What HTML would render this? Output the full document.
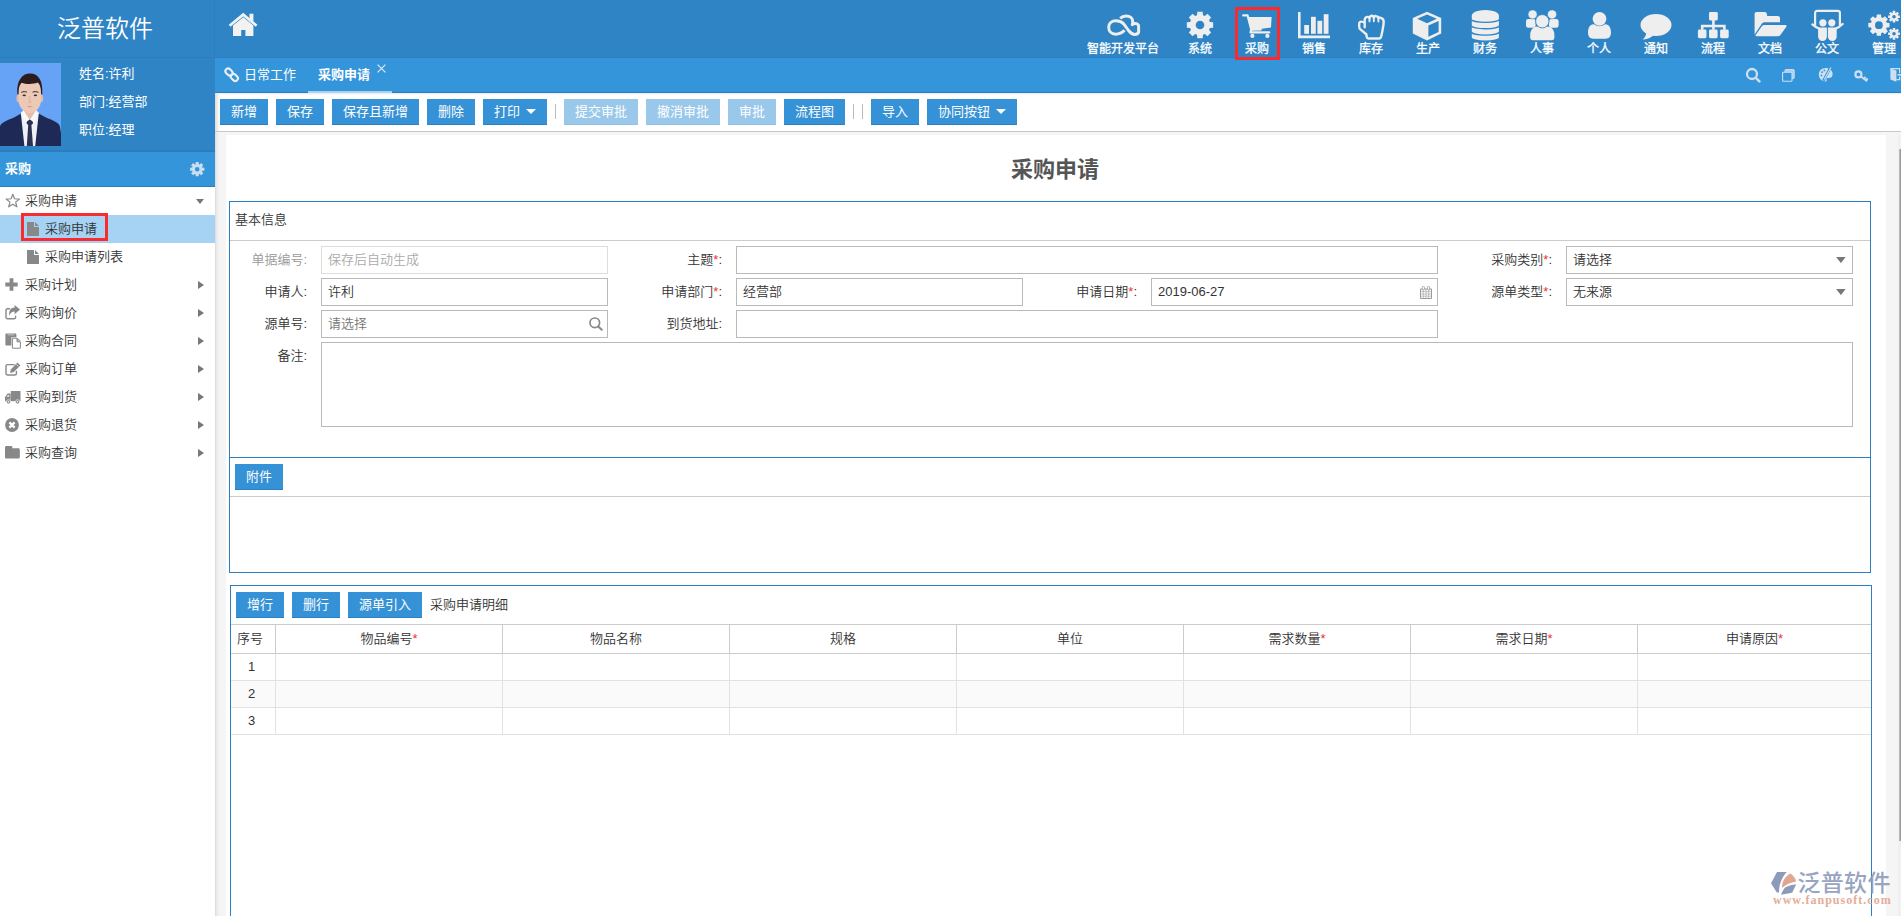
<!DOCTYPE html>
<html lang="zh-CN">
<head>
<meta charset="utf-8">
<title>采购申请</title>
<style>
*{box-sizing:border-box;margin:0;padding:0}
html,body{width:1901px;height:916px;overflow:hidden;background:#fff}
body{font-family:"Liberation Sans","Noto Sans CJK SC",sans-serif;font-size:13px;color:#333;position:relative;font-weight:350}
.abs{position:absolute}
/* header */
#hdr{left:0;top:0;width:1901px;height:58px;background:#2f84c6;border-bottom:1px solid #2c7ebf}
#logo{left:0;top:0;width:215px;height:58px;color:#fff;font-size:24px;line-height:58px;text-align:center;padding-right:5px;letter-spacing:0}
#vsep{left:214px;top:0;width:1px;height:58px;background:#2c7dbe}
#user{left:0;top:57px;width:215px;height:95px;background:#2f84c6;border-top:1px solid #2c7dbe;border-bottom:2px solid #2c7dbe}
#avatar{left:0;top:63px;width:61px;height:83px;background:#66a3f6;overflow:hidden}
.uinfo{left:79px;color:#fff;font-size:13px;line-height:18px;white-space:nowrap;font-weight:400}
.nl{position:absolute;top:41px;width:100px;text-align:center;color:#fff;font-size:12px;line-height:16px;white-space:nowrap;font-weight:400;-webkit-text-stroke:0.3px #fff}
/* sidebar */
#sec{left:0;top:152px;width:215px;height:35px;background:#3595da;border-bottom:1px solid #2a7fc1;color:#fff;font-weight:bold;font-size:13px;line-height:33px;padding-left:5px}
#side{left:0;top:187px;width:215px;height:729px;background:#fff}
#sshadow{left:215px;top:93px;width:5px;height:824px;background:linear-gradient(to right,#d9d9d9,#ececec 40%,rgba(245,245,245,0))}
.mi{position:absolute;left:0;width:215px;height:28px;line-height:28px;font-size:13px;color:#333;white-space:nowrap}
.mi .t{position:absolute;left:25px;top:0}
.mi.sub .t{left:45px}
.mi.act{background:#a6d2f3}
.arr{position:absolute;left:198px;top:10px;width:0;height:0;border-left:6.2px solid #777;border-top:4.2px solid transparent;border-bottom:4.2px solid transparent}
.arrd{position:absolute;left:195.6px;top:12px;width:0;height:0;border-top:5.5px solid #777;border-left:4.3px solid transparent;border-right:4.3px solid transparent}
/* tabs */
#tabs{left:215px;top:58px;width:1686px;height:35px;background:#3595da;border-bottom:1px solid #2a7dc1}
#tabs .tb{position:absolute;top:0;height:34px;line-height:33px;color:#fff;font-size:13px;white-space:nowrap;font-weight:400}
#tabul{left:308px;top:91px;width:84px;height:2px;background:#a8d4f4}
/* toolbar */
#tool{left:215px;top:93px;width:1686px;height:39px;background:linear-gradient(to bottom,#ececec,#fff 2.5px);border-bottom:1px solid #c9c9c9}
.btn{position:absolute;height:26px;line-height:25px;background:#3692d6;border-bottom:1px solid #2b80c4;color:#fff;font-size:13px;text-align:center;white-space:nowrap;font-weight:400}
.btn.dis{background:#9ac8ea;border-bottom-color:#93c1e4}
.tsep{position:absolute;top:104px;width:1px;height:15px;background:#bbb}
.caret{display:inline-block;width:0;height:0;border-top:5px solid #fff;border-left:5px solid transparent;border-right:5px solid transparent;vertical-align:middle;margin-left:6px;position:relative;top:-1px}
/* content */
#cbg{left:215px;top:132px;width:1686px;height:784px;background:#f5f5f5}
#page{left:226px;top:135px;width:1660px;height:781px;background:#fff}
#title{left:224px;top:152px;width:1662px;text-align:center;font-size:22px;font-weight:bold;color:#555;line-height:36px}
.fs{border:1px solid #2e7fc1;background:#fff}
.lbl{position:absolute;text-align:right;font-size:13px;color:#333;line-height:27px;white-space:nowrap;margin-left:-2px}
.lbl i{color:#e33;font-style:normal}
.inp{position:absolute;height:28px;border:1px solid #b9b9b9;background:#fff;font-size:13px;line-height:25px;padding-left:6px;color:#333;white-space:nowrap}
.hl{position:absolute;height:1px}
.gh{position:absolute;top:625px;height:28px;line-height:27px;text-align:center;font-size:13px;color:#333;white-space:nowrap}
.gh i{color:#e33;font-style:normal}
.gn{position:absolute;left:229.5px;width:44px;height:26px;line-height:26px;text-align:center;font-size:13px;color:#333}
</style>
</head>
<body>
<div id="hdr" class="abs"></div>
<div id="logo" class="abs">泛普软件</div>
<div id="user" class="abs"></div>
<div id="avatar" class="abs"><svg width="61" height="83" viewBox="0 0 61 83"><rect width="61" height="83" fill="#66a3f7"/><path d="M0,83 V63 C2,59 8,57 14,54.5 L21,50.5 L29.7,58 L38.6,50.5 L46,54.5 C52,57 58,59 59.8,63 L61,70 V83Z" fill="#1e2a55"/><path d="M20.8,50 L24,47 H36 L38.8,50 L35.2,83 H24.4Z" fill="#eef0f5"/><path d="M23.8,44 H36 V51 L29.8,57 L23.8,51Z" fill="#e3bda9"/><path d="M27,56.4 H32.6 L33,60.4 L31.4,62 L33,83 H26.8 L28.2,62 L26.6,60.4Z" fill="#2a3152"/><path d="M20.8,50 L23.6,47.4 L29.6,56.6 L25,60Z M38.8,50 L36,47.4 L30,56.6 L34.6,60Z" fill="#f7f8fb"/><ellipse cx="17.9" cy="35.4" rx="1.5" ry="3.6" fill="#e0b7a2"/><ellipse cx="41.7" cy="35.4" rx="1.5" ry="3.6" fill="#e0b7a2"/><path d="M18.4,28 C18.4,18 24,15.6 29.8,15.6 C35.6,15.6 41.2,18 41.2,28 V36 C41.2,43.6 36,50.2 29.8,50.2 C23.6,50.2 18.4,43.6 18.4,36Z" fill="#ecc9b6"/><path d="M17.4,31.4 C16.2,18 22,10.6 30,10.6 C38.6,10.6 43.2,18 42.2,31.4 L41,31 C41.2,25 40,21.4 37.6,19.6 C33,21.6 25.6,21.4 21.8,19.8 C19.6,21.8 18.6,25 18.6,31Z" fill="#2b1c1d"/><path d="M21.2,29.4 C23,28.4 25.4,28.4 27,29.2 M32.6,29.2 C34.2,28.4 36.6,28.4 38.4,29.4" stroke="#3a2621" stroke-width="1" fill="none"/><ellipse cx="24.2" cy="32.3" rx="1.7" ry="0.9" fill="#3b2a27"/><ellipse cx="35.4" cy="32.3" rx="1.7" ry="0.9" fill="#3b2a27"/><path d="M29.8,33 V38.6 M28.2,39.4 H31.4" stroke="#d9ad98" stroke-width="0.9" fill="none"/><path d="M26.8,43.6 C28.6,43 31,43 32.8,43.6 C31,44.6 28.6,44.6 26.8,43.6Z" fill="#cf8a80"/></svg></div>
<div class="abs uinfo" style="top:65px">姓名:许利</div>
<div class="abs uinfo" style="top:93px">部门:经营部</div>
<div class="abs uinfo" style="top:121px">职位:经理</div>
<div id="vsep" class="abs"></div>

<!--NAV-->
<svg class="abs" style="left:228px;top:12px" width="30" height="25" viewBox="0 0 30 25"><path d="M1.6,13.8 L15.2,2.6 L28.6,13.8" fill="none" stroke="#f2f2f2" stroke-width="2.7"/><rect x="21.5" y="1.7" width="3.9" height="8" fill="#f2f2f2"/><path d="M5,13.4 L15.2,5.2 L25.4,13.4 V24 H17.4 V18 H13.2 V24 H5Z" fill="#f2f2f2"/></svg>
<div class="nl" style="left:1073px">智能开发平台</div>
<svg class="abs" style="left:1105px;top:13px" width="36" height="24" viewBox="0 0 36 24" ><path d="M15.2,5.4 C17,3.6 19,3 21,3 C25,3 27.7,5 27.7,8 C27.8,9.6 27.6,10.8 27.3,11.7 C28.4,10.8 29.6,10.5 30.6,10.6 C32,10.7 33,11.4 33.6,12.4 V19.1 C33,20.6 31.6,21.4 29.9,21.4 C27.6,21.4 25.6,20 24,18 C22,15.6 20.6,13.2 18.8,11 C16.8,8.8 14,7.8 11,7.8 C6.6,7.8 3.7,10.6 3.7,14.3 C3.7,18.4 6.6,21.2 10.6,21.2 C14.4,21.2 17.4,19.6 19.5,17.3" fill="none" stroke="#eee" stroke-width="3" stroke-linecap="butt" stroke-linejoin="round"/></svg>

<div class="nl" style="left:1150px">系统</div>
<svg class="abs" style="left:1186.3px;top:11.3px" width="28" height="28" viewBox="0 0 28 28" ><path fill-rule="evenodd" fill="#eee" d="M23.86,11.03 L27.14,11.37 L27.14,16.63 L23.86,16.97 L23.07,18.88 L25.15,21.43 L21.43,25.15 L18.88,23.07 L16.97,23.86 L16.63,27.14 L11.37,27.14 L11.03,23.86 L9.12,23.07 L6.57,25.15 L2.85,21.43 L4.93,18.88 L4.14,16.97 L0.86,16.63 L0.86,11.37 L4.14,11.03 L4.93,9.12 L2.85,6.57 L6.57,2.85 L9.12,4.93 L11.03,4.14 L11.37,0.86 L16.63,0.86 L16.97,4.14 L18.88,4.93 L21.43,2.85 L25.15,6.57 L23.07,9.12Z M9.70,14.00 a4.30,4.30 0 1,0 8.60,0 a4.30,4.30 0 1,0 -8.60,0Z"/></svg>

<div class="nl" style="left:1207px">采购</div>
<svg class="abs" style="left:1242px;top:13px" width="31" height="26" viewBox="0 0 31 26" ><path d="M1.2,2.4 H5.6 L9.2,16.6 L18.8,16.4" fill="none" stroke="#eee" stroke-width="2.2" stroke-linejoin="round" stroke-linecap="round"/><path d="M6.4,3.9 H29.6 L29,14.6 L9.2,17.3Z" fill="#eee"/><path d="M9.2,16.6 L8.6,19.4 H27.2" fill="none" stroke="#eee" stroke-width="2.3" stroke-linecap="round" stroke-linejoin="round"/><circle cx="10.4" cy="22.9" r="2.1" fill="#eee"/><circle cx="25.4" cy="22.9" r="2.1" fill="#eee"/></svg>

<div class="nl" style="left:1264px">销售</div>
<svg class="abs" style="left:1297px;top:11px" width="34" height="28" viewBox="0 0 34 28" ><path d="M1,1 H3.6 V24.6 H33 V27.2 H1Z" fill="#eee"/><rect x="7.2" y="14" width="4.8" height="8.8" fill="#eee"/><rect x="14" y="5.8" width="4.8" height="17" fill="#eee"/><rect x="20.4" y="9.8" width="4.8" height="13" fill="#eee"/><rect x="26.7" y="3.2" width="4.8" height="19.6" fill="#eee"/></svg>

<div class="nl" style="left:1321px">库存</div>
<svg class="abs" style="left:1357px;top:13.5px" width="29" height="27" viewBox="0 0 29 27" ><path d="M7.7,13.2 V6 C7.7,3.6 9.4,2.8 10.9,2.9 C11.8,3 12.4,3.4 12.6,4 C13,2.4 14,1.8 14.8,1.8 C15.8,1.8 16.6,2.4 16.8,3.6 C17.2,2.4 18.2,2 19,2.1 C20.2,2.2 21.2,3 21.4,4.2 C21.8,3.6 22.8,3.4 23.8,3.8 C25.6,4.4 26.7,5.6 26.7,7.4 C26.7,11 26,14 25.4,17 L24.2,22.4 C24,23.8 23.2,24.5 22,24.5 H12 C10.6,24.5 9.9,23.8 9.7,22.6 L9.3,20.2 L3.4,15.4 C2.4,14.6 2.2,13.6 2.2,12.4 V9.8 C2.2,8.4 3.2,7.6 4.6,7.6 C6,7.6 7.2,8.2 7.7,9.4" fill="none" stroke="#eee" stroke-width="2.4" stroke-linejoin="round" stroke-linecap="round"/><path d="M12.5,4.2 V7.4 M16.8,3.8 V7.2 M21.4,4.4 V7.6" fill="none" stroke="#eee" stroke-width="1.9" stroke-linecap="round"/></svg>

<div class="nl" style="left:1378px">生产</div>
<svg class="abs" style="left:1412px;top:11px" width="30" height="30" viewBox="0 0 30 30" ><path d="M15,0.8 L29.2,7 V22.6 L15,29.4 L0.8,22.6 V7Z" fill="#eee"/><path d="M15,3.6 L24.8,7.8 L15,12.2 L5.2,7.8Z" fill="#2f84c6"/><path d="M16.4,14.6 L26.6,10 V21 L16.4,25.8Z" fill="#2f84c6"/></svg>

<div class="nl" style="left:1435px">财务</div>
<svg class="abs" style="left:1471px;top:9px" width="29" height="32" viewBox="0 0 29 32" ><path d="M0.8,6.7 V28.3 A13.55,3.2 0 0 0 27.9,28.3 V6.7Z" fill="#eee"/><ellipse cx="14.35" cy="6.7" rx="13.55" ry="5.8" fill="#eee"/><path d="M0.3,10.15 A13.8,3.2 0 0 0 28.4,10.15" fill="none" stroke="#2f84c6" stroke-width="1.3"/><path d="M0.3,16.5 A13.8,3.2 0 0 0 28.4,16.5" fill="none" stroke="#2f84c6" stroke-width="1.3"/><path d="M0.3,22.8 A13.8,3.2 0 0 0 28.4,22.8" fill="none" stroke="#2f84c6" stroke-width="1.3"/></svg>

<div class="nl" style="left:1492px">人事</div>
<svg class="abs" style="left:1525px;top:9px" width="35" height="32" viewBox="0 0 35 32" ><rect x="1" y="9.9" width="9.6" height="8.9" rx="2.4" fill="#eee"/><rect x="24" y="9.9" width="9.6" height="8.9" rx="2.4" fill="#eee"/><circle cx="7.6" cy="5.4" r="4.5" fill="#eee" stroke="#2f84c6" stroke-width="0.5"/><circle cx="27.06" cy="5.4" r="4.5" fill="#eee" stroke="#2f84c6" stroke-width="0.5"/><path d="M5.2,26 C5.2,20.4 8.4,17.4 12.4,17.4 H22.2 C26.2,17.4 29.4,20.4 29.4,26 V28.6 C29.4,30.2 28.4,31.2 26.8,31.2 H7.8 C6.2,31.2 5.2,30.2 5.2,28.6Z" fill="#eee"/><circle cx="17.3" cy="12.25" r="6.7" fill="#eee" stroke="#2f84c6" stroke-width="0.9"/></svg>

<div class="nl" style="left:1549px">个人</div>
<svg class="abs" style="left:1587px;top:11px" width="25" height="29" viewBox="0 0 25 29" ><circle cx="12.5" cy="7.8" r="6.9" fill="#eee"/><path d="M1,21.6 C1,15.4 4,12.8 7,13.2 C10,15.8 15,15.8 18,13.2 C21,12.8 24,15.4 24,21.6 C24,26 21.6,27.8 18.8,27.8 H6.2 C3.4,27.8 1,26 1,21.6Z" fill="#eee"/></svg>

<div class="nl" style="left:1606px">通知</div>
<svg class="abs" style="left:1640px;top:13px" width="32" height="28" viewBox="0 0 32 28" ><ellipse cx="16" cy="12" rx="15.5" ry="11" fill="#eee"/><path d="M6.4,18 C6.6,22 5,24.6 2.6,26.4 C7.6,26.6 11.6,24.6 14,21.6Z" fill="#eee"/></svg>

<div class="nl" style="left:1663px">流程</div>
<svg class="abs" style="left:1697px;top:11px" width="33" height="28" viewBox="0 0 33 28" ><rect x="12" y="0.9" width="8.8" height="8.6" rx="1.4" fill="#eee"/><rect x="0.9" y="18.6" width="8.6" height="8.6" rx="1.4" fill="#eee"/><rect x="12" y="18.6" width="8.6" height="8.6" rx="1.4" fill="#eee"/><rect x="23.1" y="18.6" width="8.6" height="8.6" rx="1.4" fill="#eee"/><path d="M16.4,9 V18.8 M5.2,18.8 V15 H27.4 V18.8" fill="none" stroke="#eee" stroke-width="2.6"/></svg>

<div class="nl" style="left:1720px">文档</div>
<svg class="abs" style="left:1754px;top:11px" width="34" height="26" viewBox="0 0 34 26" ><path d="M0.6,3 C0.6,1.6 1.4,0.9 2.6,0.9 H10.6 C12,0.9 12.6,1.6 12.8,2.8 L13.2,5 H23.6 C25.2,5 26,5.8 26,7.2 V11.2 H11 C9.4,11.2 8.4,11.8 7.6,13 L0.6,23.4Z" fill="#eee"/><path d="M10.2,14 H31 C32.6,14 33,14.8 32.2,16 L26.4,24 C25.8,24.8 25,25.2 24,25.2 H2.6 C1.4,25.2 1.2,24.6 1.8,23.8 L7.8,15.2 C8.4,14.4 9.2,14 10.2,14Z" fill="#eee"/></svg>

<div class="nl" style="left:1777px">公文</div>
<svg class="abs" style="left:1811px;top:9px" width="33" height="33" viewBox="0 0 33 33" ><path d="M4.1,16.4 V4 C4.1,2.7 4.9,1.9 6.2,1.9 H26.8 C28.1,1.9 28.9,2.7 28.9,4 V16.4" fill="none" stroke="#eee" stroke-width="2.2"/><path d="M1.4,15.4 C3.6,17.4 6,18.8 8.6,19.8 M31.6,15 C29.4,17.2 27,18.8 24.4,19.8" fill="none" stroke="#eee" stroke-width="2.3" stroke-linecap="round"/><circle cx="11.9" cy="13.8" r="3.6" fill="#eee"/><circle cx="20.8" cy="13.8" r="3.6" fill="#eee"/><path d="M7.1,18.6 H15.9 V27.6 a4.4,4.4 0 0 1 -8.8,0Z" fill="#eee"/><path d="M16.9,18.6 H25.7 V27.6 a4.4,4.4 0 0 1 -8.8,0Z" fill="#eee"/></svg>

<div class="nl" style="left:1834px">管理</div>
<svg class="abs" style="left:1868px;top:9px" width="33" height="33" viewBox="0 0 33 33" ><path fill-rule="evenodd" fill="#eee" d="M18.75,13.84 L21.49,14.08 L21.49,18.32 L18.75,18.56 L18.12,20.08 L19.89,22.19 L16.89,25.19 L14.78,23.42 L13.26,24.05 L13.02,26.79 L8.78,26.79 L8.54,24.05 L7.02,23.42 L4.91,25.19 L1.91,22.19 L3.68,20.08 L3.05,18.56 L0.31,18.32 L0.31,14.08 L3.05,13.84 L3.68,12.32 L1.91,10.21 L4.91,7.21 L7.02,8.98 L8.54,8.35 L8.78,5.61 L13.02,5.61 L13.26,8.35 L14.78,8.98 L16.89,7.21 L19.89,10.21 L18.12,12.32Z M7.00,16.20 a3.90,3.90 0 1,0 7.80,0 a3.90,3.90 0 1,0 -7.80,0Z"/><path fill-rule="evenodd" fill="#eee" d="M30.00,6.41 L31.87,6.44 L31.87,8.96 L30.00,8.99 L29.74,9.62 L31.04,10.96 L29.26,12.74 L27.92,11.44 L27.29,11.70 L27.26,13.57 L24.74,13.57 L24.71,11.70 L24.08,11.44 L22.74,12.74 L20.96,10.96 L22.26,9.62 L22.00,8.99 L20.13,8.96 L20.13,6.44 L22.00,6.41 L22.26,5.78 L20.96,4.44 L22.74,2.66 L24.08,3.96 L24.71,3.70 L24.74,1.83 L27.26,1.83 L27.29,3.70 L27.92,3.96 L29.26,2.66 L31.04,4.44 L29.74,5.78Z M24.20,7.70 a1.80,1.80 0 1,0 3.60,0 a1.80,1.80 0 1,0 -3.60,0Z"/><path fill-rule="evenodd" fill="#eee" d="M30.00,23.51 L31.87,23.54 L31.87,26.06 L30.00,26.09 L29.74,26.72 L31.04,28.06 L29.26,29.84 L27.92,28.54 L27.29,28.80 L27.26,30.67 L24.74,30.67 L24.71,28.80 L24.08,28.54 L22.74,29.84 L20.96,28.06 L22.26,26.72 L22.00,26.09 L20.13,26.06 L20.13,23.54 L22.00,23.51 L22.26,22.88 L20.96,21.54 L22.74,19.76 L24.08,21.06 L24.71,20.80 L24.74,18.93 L27.26,18.93 L27.29,20.80 L27.92,21.06 L29.26,19.76 L31.04,21.54 L29.74,22.88Z M24.20,24.80 a1.80,1.80 0 1,0 3.60,0 a1.80,1.80 0 1,0 -3.60,0Z"/></svg>

<!--/NAV-->
<div id="sec" class="abs">采购</div>
<div id="side" class="abs">
  <div class="mi" style="top:0"><span class="t">采购申请</span><span class="arrd"></span></div>
  <div class="mi sub act" style="top:28px"><span class="t">采购申请</span></div>
  <div class="mi sub" style="top:56px"><span class="t">采购申请列表</span></div>
  <div class="mi" style="top:84px"><span class="t">采购计划</span><span class="arr"></span></div>
  <div class="mi" style="top:112px"><span class="t">采购询价</span><span class="arr"></span></div>
  <div class="mi" style="top:140px"><span class="t">采购合同</span><span class="arr"></span></div>
  <div class="mi" style="top:168px"><span class="t">采购订单</span><span class="arr"></span></div>
  <div class="mi" style="top:196px"><span class="t">采购到货</span><span class="arr"></span></div>
  <div class="mi" style="top:224px"><span class="t">采购退货</span><span class="arr"></span></div>
  <div class="mi" style="top:252px"><span class="t">采购查询</span><span class="arr"></span></div>
</div>
<div class="abs" style="left:21px;top:213px;width:87px;height:28px;border:3px solid #fb2a2c"></div>

<!--SIDEICONS-->
<svg class="abs" style="left:189px;top:161px" width="16" height="16" viewBox="0 0 16 16" ><path fill-rule="evenodd" fill="#c9def0" d="M13.26,6.62 L15.35,6.72 L15.35,9.68 L13.26,9.78 L12.89,10.66 L14.30,12.21 L12.21,14.30 L10.66,12.89 L9.78,13.26 L9.68,15.35 L6.72,15.35 L6.62,13.26 L5.74,12.89 L4.19,14.30 L2.10,12.21 L3.51,10.66 L3.14,9.78 L1.05,9.68 L1.05,6.72 L3.14,6.62 L3.51,5.74 L2.10,4.19 L4.19,2.10 L5.74,3.51 L6.62,3.14 L6.72,1.05 L9.68,1.05 L9.78,3.14 L10.66,3.51 L12.21,2.10 L14.30,4.19 L12.89,5.74Z M5.90,8.20 a2.30,2.30 0 1,0 4.60,0 a2.30,2.30 0 1,0 -4.60,0Z"/></svg>
<svg class="abs" style="left:4.5px;top:192.8px" width="16" height="16" viewBox="0 0 16 16" ><polygon points="7.80,1.20 9.56,5.77 14.46,6.04 10.65,9.13 11.91,13.86 7.80,11.20 3.69,13.86 4.95,9.13 1.14,6.04 6.04,5.77" fill="none" stroke="#888" stroke-width="1.2" stroke-linejoin="round"/></svg>
<svg class="abs" style="left:27px;top:222px" width="12" height="14" viewBox="0 0 12 14" ><path d="M0,0 H7 V5 H12 V14 H0Z M8,0 L12,4 H8Z" fill="#888"/></svg>
<svg class="abs" style="left:27px;top:250px" width="12" height="14" viewBox="0 0 12 14" ><path d="M0,0 H7 V5 H12 V14 H0Z M8,0 L12,4 H8Z" fill="#888"/></svg>
<svg class="abs" style="left:5px;top:278px" width="13" height="13" viewBox="0 0 13 13" ><path d="M4.6,0.3 H8.4 V4.6 H12.7 V8.4 H8.4 V12.7 H4.6 V8.4 H0.3 V4.6 H4.6Z" fill="#888"/></svg>
<svg class="abs" style="left:5px;top:305px" width="16" height="15" viewBox="0 0 16 15" ><path d="M10.6,11.2 V12.2 C10.6,13.2 10,13.8 9,13.8 H2.6 C1.6,13.8 1,13.2 1,12.2 V5.4 C1,4.4 1.6,3.8 2.6,3.8 H4.6" fill="none" stroke="#888" stroke-width="1.4" stroke-linecap="round"/><path d="M9.6,0 L15,4.6 L9.6,9.2 V6.6 C7,6.6 5.4,7.6 4.4,10.8 C3.4,6 5.8,2.6 9.6,2.6Z" fill="#888"/></svg>
<svg class="abs" style="left:5px;top:333px" width="17" height="16" viewBox="0 0 17 16" ><path d="M0.4,1.4 C0.4,0.8 0.8,0.4 1.4,0.4 H10.4 C11,0.4 11.4,0.8 11.4,1.4 V4.2 H6.4 V12.6 H1.4 C0.8,12.6 0.4,12.2 0.4,11.6Z" fill="#888"/><rect x="2.6" y="1.2" width="6.6" height="1.2" fill="#bbb"/><path d="M7.4,5.2 H12 V8.8 H15.4 V15.2 H7.4Z" fill="#fff" stroke="#888" stroke-width="1"/><path d="M12.6,5.4 L15.2,8 H12.6Z" fill="#fff" stroke="#888" stroke-width="0.9" stroke-linejoin="round"/></svg>
<svg class="abs" style="left:5px;top:361.6px" width="16" height="14" viewBox="0 0 16 14" ><path d="M11.4,9.4 V11.4 C11.4,12.4 10.8,13 9.8,13 H2.6 C1.6,13 1,12.4 1,11.4 V4.2 C1,3.2 1.6,2.6 2.6,2.6 H9" fill="none" stroke="#888" stroke-width="1.4" stroke-linecap="round"/><path d="M12.4,0.4 L15.4,3.4 L8.8,10 L5,11 L6,7.2Z" fill="#888"/><path d="M11.4,2.4 L13.4,4.4" stroke="#fff" stroke-width="0.7"/></svg>
<svg class="abs" style="left:5.4px;top:391.2px" width="16" height="13" viewBox="0 0 16 13" ><path d="M5.8,0 H15.5 V10.2 H5.8Z" fill="#888"/><path d="M5.6,2.6 H2.7 L0,6 V10.2 H5.6Z" fill="#888"/><path d="M1.3,5.9 L3,3.9 H4.2 V5.9Z" fill="#ddd"/><circle cx="3.5" cy="10.8" r="2.1" fill="#888" stroke="#fff" stroke-width="0.6"/><circle cx="12.6" cy="10.8" r="2.1" fill="#888" stroke="#fff" stroke-width="0.6"/><circle cx="3.5" cy="10.8" r="0.8" fill="#fff"/><circle cx="12.6" cy="10.8" r="0.8" fill="#fff"/></svg>
<svg class="abs" style="left:5px;top:418px" width="14" height="14" viewBox="0 0 14 14" ><circle cx="7" cy="7" r="6.9" fill="#888"/><path d="M4.4,4.4 L9.6,9.6 M9.6,4.4 L4.4,9.6" stroke="#fff" stroke-width="2.2"/></svg>
<svg class="abs" style="left:5px;top:446.3px" width="15" height="13" viewBox="0 0 15 13" ><path d="M0,1.4 C0,0.6 0.6,0 1.4,0 H6 C6.8,0 7.4,0.6 7.4,1.4 V2.2 H13.4 C14.2,2.2 14.8,2.8 14.8,3.6 V11.2 C14.8,12 14.2,12.6 13.4,12.6 H1.4 C0.6,12.6 0,12 0,11.2Z" fill="#888"/></svg>
<!--/SIDEICONS-->
<div id="tabs" class="abs">
  <div class="tb" style="left:29px">日常工作</div>
  <div class="tb" style="left:103px;font-weight:bold">采购申请</div>
</div>
<div id="tabul" class="abs"></div>

<!--TABICONS-->
<svg class="abs" style="left:224px;top:66.6px" width="16" height="16" viewBox="0 0 16 16" ><g fill="none" stroke="#e8eef4" stroke-width="2.1"><rect x="-3.9" y="-2.7" width="7.8" height="5.4" rx="2.7" transform="translate(5,5.1) rotate(45)"/><rect x="-3.9" y="-2.7" width="7.8" height="5.4" rx="2.7" transform="translate(10.4,10.5) rotate(45)"/></g></svg>
<svg class="abs" style="left:376.5px;top:64.2px" width="9" height="9" viewBox="0 0 9 9" ><path d="M0.6,0.6 L8.4,8.4 M8.4,0.6 L0.6,8.4" stroke="#e4eef7" stroke-width="1.1"/></svg>
<svg class="abs" style="left:1745px;top:67.4px" width="16" height="16" viewBox="0 0 16 16" ><circle cx="7" cy="7" r="5" fill="none" stroke="#cde0f1" stroke-width="2.3"/><path d="M10.8,10.8 L14.4,14.4" stroke="#cde0f1" stroke-width="2.6" stroke-linecap="round"/></svg>
<svg class="abs" style="left:1782.4px;top:68.6px" width="13" height="13" viewBox="0 0 13 13" ><rect x="3" y="0.6" width="9.2" height="9" rx="0.8" fill="#a9cdea" stroke="#cde0f1" stroke-width="1"/><rect x="0.6" y="3.2" width="9.4" height="9" rx="0.8" fill="#3595da" stroke="#cde0f1" stroke-width="1.1"/></svg>
<svg class="abs" style="left:1817.8px;top:67px" width="16" height="16" viewBox="0 0 16 16" ><path d="M7.6,1 C11.6,1 14.6,3.6 14.6,7 C14.6,10.4 12,11.4 10,11 C8.6,10.8 8,11.8 8.6,12.8 C9,13.8 8.4,14.4 7.2,14.4 C3.4,14.2 0.8,11.2 0.8,7.6 C0.8,3.8 3.8,1 7.6,1Z" fill="#cde0f1"/><path d="M12.6,0.2 L5.4,13.6" stroke="#3595da" stroke-width="2.6"/><path d="M12.9,0.4 L6.2,12.6" stroke="#cde0f1" stroke-width="1.1"/><circle cx="4" cy="5.2" r="0.9" fill="#3595da"/><circle cx="6.4" cy="3.4" r="0.9" fill="#3595da"/><circle cx="3.4" cy="8.4" r="0.9" fill="#3595da"/></svg>
<svg class="abs" style="left:1853.6px;top:69.6px" width="15" height="13" viewBox="0 0 15 13" ><circle cx="4.4" cy="4.4" r="3" fill="none" stroke="#cde0f1" stroke-width="2.2"/><path d="M6.6,6.2 L13.2,11.2 M10,8.8 L11.6,6.8 M12,10.4 L13.6,8.4" stroke="#cde0f1" stroke-width="2" fill="none"/></svg>
<svg class="abs" style="left:1890.2px;top:68px" width="11" height="14" viewBox="0 0 11 14" ><path d="M0.4,0.6 L6.4,2.6 V13.8 L0.4,11.6Z" fill="#cde0f1"/><path d="M0.4,0.6 H9.6 V5 M9.6,8.6 V11.6 H6.4" fill="none" stroke="#cde0f1" stroke-width="1.2"/><path d="M7.6,6.8 H11" stroke="#cde0f1" stroke-width="1.6"/></svg>
<!--/TABICONS-->
<div id="tool" class="abs"></div>
<div class="btn" style="left:220px;top:99px;width:48px">新增</div>
<div class="btn" style="left:276px;top:99px;width:48px">保存</div>
<div class="btn" style="left:332px;top:99px;width:87px">保存且新增</div>
<div class="btn" style="left:427px;top:99px;width:48px">删除</div>
<div class="btn" style="left:483px;top:99px;width:64px">打印<span class="caret"></span></div>
<div class="tsep" style="left:555px"></div>
<div class="btn dis" style="left:564px;top:99px;width:74px">提交审批</div>
<div class="btn dis" style="left:646px;top:99px;width:74px">撤消审批</div>
<div class="btn dis" style="left:728px;top:99px;width:48px">审批</div>
<div class="btn" style="left:784px;top:99px;width:61px">流程图</div>
<div class="tsep" style="left:853px"></div>
<div class="tsep" style="left:862px"></div>
<div class="btn" style="left:871px;top:99px;width:48px">导入</div>
<div class="btn" style="left:927px;top:99px;width:90px">协同按钮<span class="caret"></span></div>

<div id="cbg" class="abs"></div>
<div id="page" class="abs"></div>
<div id="sshadow" class="abs"></div>
<div class="abs" style="left:215px;top:131px;width:8px;height:1px;background:#c9c9c9"></div>
<div id="title" class="abs">采购申请</div>

<!-- fieldset 1 -->
<div class="abs fs" style="left:229px;top:201px;width:1642px;height:372px"></div>
<div class="abs" style="left:235px;top:211px;font-size:13px;line-height:18px;color:#333">基本信息</div>
<div class="hl" style="left:230px;top:240px;width:1640px;background:#ccc"></div>

<div class="lbl" style="left:230px;top:246px;width:79px;color:#999">单据编号:</div>
<div class="inp" style="left:321px;top:246px;width:287px;border-color:#ddd;color:#aaa">保存后自动生成</div>
<div class="lbl" style="left:640px;top:246px;width:84px">主题<i>*</i>:</div>
<div class="inp" style="left:736px;top:246px;width:702px"></div>
<div class="lbl" style="left:1460px;top:246px;width:94px">采购类别<i>*</i>:</div>
<div class="inp" style="left:1566px;top:246px;width:287px">请选择</div>

<div class="lbl" style="left:230px;top:278px;width:79px">申请人:</div>
<div class="inp" style="left:321px;top:278px;width:287px">许利</div>
<div class="lbl" style="left:640px;top:278px;width:84px">申请部门<i>*</i>:</div>
<div class="inp" style="left:736px;top:278px;width:287px">经营部</div>
<div class="lbl" style="left:1050px;top:278px;width:89px">申请日期<i>*</i>:</div>
<div class="inp" style="left:1151px;top:278px;width:287px">2019-06-27</div>
<div class="lbl" style="left:1460px;top:278px;width:94px">源单类型<i>*</i>:</div>
<div class="inp" style="left:1566px;top:278px;width:287px">无来源</div>

<div class="lbl" style="left:230px;top:310px;width:79px">源单号:</div>
<div class="inp" style="left:321px;top:310px;width:287px;color:#777">请选择</div>
<div class="lbl" style="left:640px;top:310px;width:84px">到货地址:</div>
<div class="inp" style="left:736px;top:310px;width:702px"></div>

<div class="lbl" style="left:230px;top:342px;width:79px">备注:</div>
<div class="inp" style="left:321px;top:342px;width:1532px;height:85px"></div>

<div class="hl" style="left:230px;top:457px;width:1640px;background:#2e7fc1"></div>
<div class="btn" style="left:235px;top:464px;width:48px">附件</div>
<div class="hl" style="left:230px;top:496px;width:1640px;background:#ccc"></div>

<!--FORMICONS-->
<svg class="abs" style="left:1420px;top:286px" width="12" height="13" viewBox="0 0 12 13" ><path d="M0.5,3 H11.5 V12.5 H0.5Z" fill="#fff" stroke="#999" stroke-width="1"/><path d="M0.5,5.6 H11.5 M0.5,8 H11.5 M0.5,10.2 H11.5 M3.3,3 V12.5 M6,3 V12.5 M8.7,3 V12.5" stroke="#aaa" stroke-width="0.7"/><rect x="2.4" y="0.4" width="2" height="3.6" rx="0.9" fill="#fff" stroke="#999" stroke-width="0.8"/><rect x="7.6" y="0.4" width="2" height="3.6" rx="0.9" fill="#fff" stroke="#999" stroke-width="0.8"/></svg>
<svg class="abs" style="left:588px;top:316.3px" width="16" height="16" viewBox="0 0 16 16" ><circle cx="6.8" cy="6.8" r="4.8" fill="none" stroke="#888" stroke-width="1.7"/><path d="M10.2,10.4 L13.8,13.8" stroke="#888" stroke-width="2" stroke-linecap="round"/></svg>
<svg class="abs" style="left:1836px;top:256.9px" width="10" height="6.2" viewBox="0 0 10 6.2" ><path d="M0.1,0 H9.7 L4.9,6.1Z" fill="#777"/></svg>
<svg class="abs" style="left:1836px;top:288.9px" width="10" height="6.2" viewBox="0 0 10 6.2" ><path d="M0.1,0 H9.7 L4.9,6.1Z" fill="#777"/></svg>
<!--/FORMICONS-->
<!-- fieldset 2 -->
<div class="abs fs" style="left:230px;top:585px;width:1642px;height:340px"></div>
<div class="btn" style="left:236px;top:592px;width:48px">增行</div>
<div class="btn" style="left:292px;top:592px;width:48px">删行</div>
<div class="btn" style="left:348px;top:592px;width:74px">源单引入</div>
<div class="abs" style="left:430px;top:596px;font-size:13px;line-height:18px;color:#333">采购申请明细</div>

<div id="grid">
<div class="hl" style="left:231px;top:624px;width:1640px;background:#ccc"></div>
<div class="hl" style="left:231px;top:653px;width:1640px;background:#ccc"></div>
<div class="abs" style="left:231px;top:681px;width:1640px;height:26px;background:#fafafa"></div>
<div class="hl" style="left:231px;top:680px;width:1640px;background:#e2e2e2"></div>
<div class="hl" style="left:231px;top:707px;width:1640px;background:#e2e2e2"></div>
<div class="hl" style="left:231px;top:734px;width:1640px;background:#e2e2e2"></div>
<div class="abs" style="left:275px;top:625px;width:1px;height:28px;background:#ccc"></div>
<div class="abs" style="left:275px;top:654px;width:1px;height:81px;background:#e2e2e2"></div>
<div class="gh" style="left:228px;width:44px">序号</div>
<div class="abs" style="left:502px;top:625px;width:1px;height:28px;background:#ccc"></div>
<div class="abs" style="left:502px;top:654px;width:1px;height:81px;background:#e2e2e2"></div>
<div class="gh" style="left:276px;width:226px">物品编号<i>*</i></div>
<div class="abs" style="left:729px;top:625px;width:1px;height:28px;background:#ccc"></div>
<div class="abs" style="left:729px;top:654px;width:1px;height:81px;background:#e2e2e2"></div>
<div class="gh" style="left:503px;width:226px">物品名称</div>
<div class="abs" style="left:956px;top:625px;width:1px;height:28px;background:#ccc"></div>
<div class="abs" style="left:956px;top:654px;width:1px;height:81px;background:#e2e2e2"></div>
<div class="gh" style="left:730px;width:226px">规格</div>
<div class="abs" style="left:1183px;top:625px;width:1px;height:28px;background:#ccc"></div>
<div class="abs" style="left:1183px;top:654px;width:1px;height:81px;background:#e2e2e2"></div>
<div class="gh" style="left:957px;width:226px">单位</div>
<div class="abs" style="left:1410px;top:625px;width:1px;height:28px;background:#ccc"></div>
<div class="abs" style="left:1410px;top:654px;width:1px;height:81px;background:#e2e2e2"></div>
<div class="gh" style="left:1184px;width:226px">需求数量<i>*</i></div>
<div class="abs" style="left:1637px;top:625px;width:1px;height:28px;background:#ccc"></div>
<div class="abs" style="left:1637px;top:654px;width:1px;height:81px;background:#e2e2e2"></div>
<div class="gh" style="left:1411px;width:226px">需求日期<i>*</i></div>
<div class="gh" style="left:1638px;width:233px">申请原因<i>*</i></div>
<div class="gn" style="top:654px">1</div>
<div class="gn" style="top:681px">2</div>
<div class="gn" style="top:708px">3</div>
</div>

<!--WM-->
<div class="abs" style="left:1886px;top:135px;width:15px;height:781px;background:#f5f5f5"></div>
<div class="abs" style="left:1898px;top:135px;width:3px;height:781px;background:#f0f0f0"></div>
<div class="abs" style="left:1899px;top:149px;width:2px;height:692px;background:linear-gradient(to right,#cfcfcf,#9a9a9a 60%)"></div>
<svg class="abs" style="left:1771px;top:871.8px" width="26" height="23" viewBox="0 0 26 23" ><path d="M6,0 H15.8 C12,4 9,10 8.2,16.4 L8,20.6 L5.8,20.4 L0,11.2Z" fill="#8d9bbb"/><path d="M19.6,1.6 C22.4,3.6 24.4,6.4 25.2,9.4 C19.6,10.4 14.6,12.6 11,15.8 C10.8,9.8 14.2,4.2 19.6,1.6Z" fill="#e2a58d"/><path d="M14.4,15.2 C17.6,13.6 21.2,12.6 25.2,12.2 L21.2,20.8 L10,22.8 C11,19.8 12.4,17.2 14.4,15.2Z" fill="#8d9bbb"/></svg>
<div class="abs" style="left:1797.5px;top:866px;font-size:23px;line-height:34px;color:#8d9bbb;font-weight:500;white-space:nowrap;letter-spacing:0.3px;opacity:.9">泛普软件</div>
<div class="abs" style="left:1773px;top:893px;font-family:'Liberation Serif',serif;font-size:12px;line-height:14px;color:#e2a58d;white-space:nowrap;letter-spacing:1.02px;font-weight:bold;opacity:.9">www.fanpusoft.com</div>
<!--/WM-->
<div class="abs" style="left:1235px;top:7px;width:45px;height:53px;border:3px solid #fb2a2c"></div>
</body>
</html>
